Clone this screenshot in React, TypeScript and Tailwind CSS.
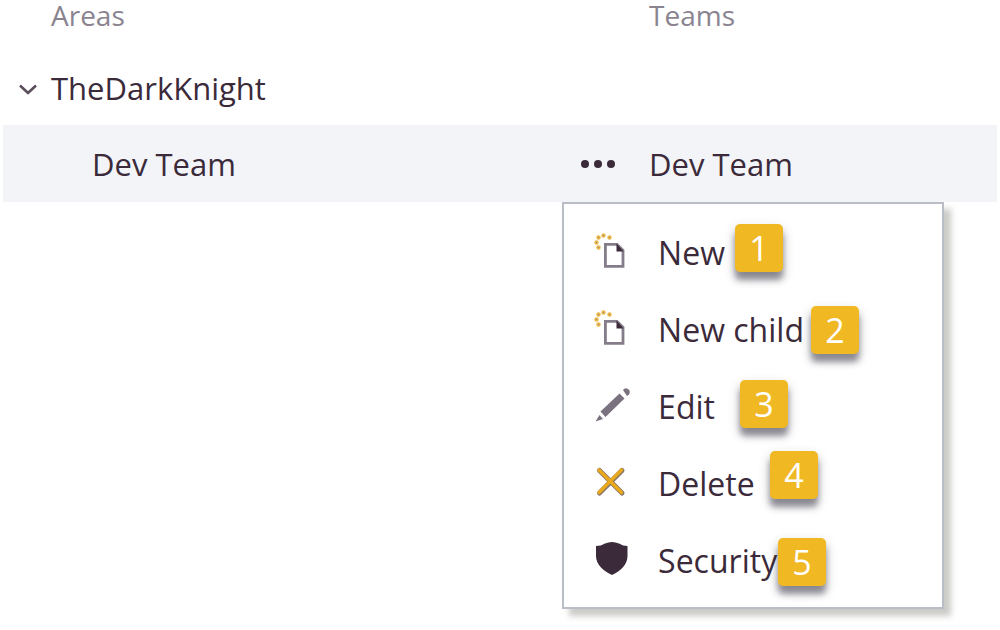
import type { ReactNode } from "react";

function NewIcon() {
  return (
    <svg viewBox="0 0 36 36" className="mb-1 size-9" fill="none" aria-hidden="true">
      <path d="M11.4 11.4h11.600l6 6v16h-17.600z" stroke="#857c8a" strokeWidth="2.8" />
      <path d="M22.500 10.500v8h7z" fill="#3b2a3a" />
      <g fill="#7d7480" stroke="#e9b84c" strokeWidth="1.700">
        <circle cx="15.500" cy="4.500" r="1.400" />
        <circle cx="9.500" cy="2.500" r="1.400" />
        <circle cx="4.500" cy="4.500" r="1.400" />
        <circle cx="2.500" cy="9.500" r="1.400" />
        <circle cx="4.500" cy="14.500" r="1.400" />
      </g>
    </svg>
  );
}

function EditIcon() {
  return (
    <svg viewBox="0 0 36 36" className="mb-1 size-9" fill="#7a727f" aria-hidden="true">
      <path d="M6.500 24.500 25.500 6.500l5 5L11.500 30z" />
      <path d="M29 3Q31 0 34 2t1 5.500L33 9z" />
      <path d="M5.500 28 9 32 1.500 34.500z" />
    </svg>
  );
}

function DeleteIcon() {
  return (
    <svg viewBox="0 0 36 36" className="mb-1 size-9" fill="none" strokeLinecap="round" aria-hidden="true">
      <path d="M5.500 6.500 28 29M28 6.500 5.500 29" stroke="#85756b" strokeWidth="5" />
      <path d="M5 6 27.500 28.500M27.500 6 5 28.500" stroke="#eaa91c" strokeWidth="3.400" />
    </svg>
  );
}

function ShieldIcon() {
  return (
    <svg viewBox="0 0 36 36" className="mb-1 size-9" aria-hidden="true">
      <path d="M2 5Q7 5 11 2.500Q18 -.5 25 2.500Q29 5 33.500 5V15C33.500 24 26 30.500 18 34C10 30.500 2 24 2 15Z" fill="#3b2a3a" />
    </svg>
  );
}

type Item = { label: string; icon: ReactNode; badge: string; place: string };

const items: Item[] = [
  { label: "New", icon: <NewIcon />, badge: "1", place: "left-[171px] top-[10px]" },
  { label: "New child", icon: <NewIcon />, badge: "2", place: "left-[247px] top-[15px]" },
  { label: "Edit", icon: <EditIcon />, badge: "3", place: "left-[176px] top-[12px]" },
  { label: "Delete", icon: <DeleteIcon />, badge: "4", place: "left-[206px] top-[6px]" },
  { label: "Security", icon: <ShieldIcon />, badge: "5", place: "left-[214px] top-[16px]" },
];

function ContextMenu() {
  return (
    <div
      role="menu"
      className="absolute -left-[87px] top-full z-10 w-[382px] border-2 border-[#b9bdc5] bg-white pt-[10px] pb-2 text-[32px] shadow-[7px_7px_6px_rgba(90,90,80,0.32)]"
    >
      {items.map((item) => (
        <button
          key={item.label}
          type="button"
          role="menuitem"
          className="relative flex h-[77px] w-full items-center gap-7 pl-[30px] text-left"
        >
          {item.icon}
          <span>{item.label}</span>
          <span
            className={`absolute flex size-12 items-center justify-center rounded-[5px] bg-[#f0b823] text-[34px] leading-none text-white shadow-[0_8px_6px_rgba(60,55,70,0.5),0_5px_12px_rgba(60,55,70,0.25)] ${item.place}`}
          >
            {item.badge}
          </span>
        </button>
      ))}
    </div>
  );
}

export default function App() {
  return (
    <main className="min-h-screen bg-white px-[3px] font-['Open_Sans','Noto_Sans',sans-serif] text-[31px] leading-10 text-[#3b2a3a]">
      <table className="w-full table-fixed border-collapse">
        <thead>
          <tr className="h-[50px] text-left align-top text-[28px] leading-[30px] text-[#8a8490]">
            <th scope="col" className="w-[65%] p-0 pl-12 font-normal">Areas</th>
            <th scope="col" className="p-0 font-normal">Teams</th>
          </tr>
        </thead>
        <tbody>
          <tr className="h-[75px]">
            <td className="p-0 pl-3">
              <div className="flex items-center gap-3">
                <button type="button" aria-label="Collapse TheDarkKnight" className="flex size-6 items-center justify-center">
                  <svg viewBox="0 0 24 24" className="size-6" fill="none" stroke="#5a4d5c" strokeWidth="2.6" aria-hidden="true">
                    <path d="M5 9.500l8 7.500L21 9.500" />
                  </svg>
                </button>
                <span>TheDarkKnight</span>
              </div>
            </td>
            <td className="p-0" />
          </tr>
          <tr className="h-[77px] bg-[#f2f4f8]">
            <td className="p-0 pl-[89px] pr-[34px]">
              <div className="flex items-center justify-between">
                <span>Dev Team</span>
                <button type="button" aria-label="More actions" className="flex h-10 items-center gap-[5px]">
                  <span className="size-2 rounded-full bg-[#3b2a3a]" />
                  <span className="size-2 rounded-full bg-[#3b2a3a]" />
                  <span className="size-2 rounded-full bg-[#3b2a3a]" />
                </button>
              </div>
            </td>
            <td className="relative p-0">
              Dev Team
              <ContextMenu />
            </td>
          </tr>
        </tbody>
      </table>
    </main>
  );
}
